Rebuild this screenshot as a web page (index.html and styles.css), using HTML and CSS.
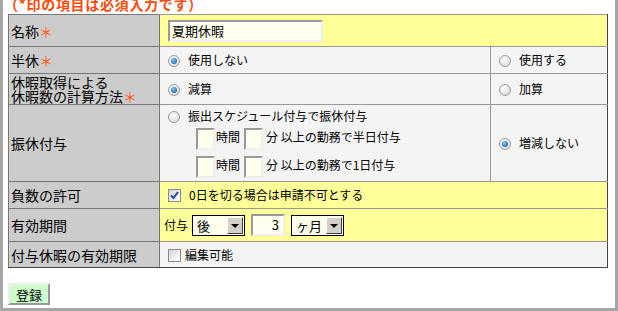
FILE: index.html
```html
<!DOCTYPE html>
<html lang="ja">
<head>
    <meta charset="UTF-8">
    <title>休暇設定</title>
    <link rel="stylesheet" href="styles.css">
</head>
<body>
    <div class="frame">
        <p class="note">（*印の項目は必須入力です）</p>
        <table class="form">
            <tr class="r1">
                <th>名称<span class="req">＊</span></th>
                <td colspan="2" class="yellow"><span class="text wide">夏期休暇</span></td>
            </tr>
            <tr class="r2">
                <th>半休<span class="req">＊</span></th>
                <td class="mid"><span class="radio on"></span>使用しない</td>
                <td class="side"><span class="radio"></span>使用する</td>
            </tr>
            <tr class="r3">
                <th>休暇取得による<br>休暇数の計算方法<span class="req">＊</span></th>
                <td class="mid"><span class="radio on"></span>減算</td>
                <td class="side"><span class="radio"></span>加算</td>
            </tr>
            <tr class="r4">
                <th>振休付与</th>
                <td class="mid">
                    <div class="line first"><span class="radio"></span>振出スケジュール付与で振休付与</div>
                    <div class="line sub"><span class="text tiny"></span>時間<span class="text tiny"></span>分 以上の勤務で半日付与</div>
                    <div class="line sub"><span class="text tiny"></span>時間<span class="text tiny"></span>分 以上の勤務で1日付与</div>
                </td>
                <td class="side"><span class="radio on"></span>増減しない</td>
            </tr>
            <tr class="r5">
                <th>負数の許可</th>
                <td colspan="2" class="yellow"><span class="check on"><svg width="11" height="11" viewBox="0 0 11 11"><path d="M2 5.5 L4.5 8 L9 2" fill="none" stroke="#2147a8" stroke-width="2"/></svg></span>0日を切る場合は申請不可とする</td>
            </tr>
            <tr class="r6">
                <th>有効期間</th>
                <td colspan="2" class="yellow">
                    <div class="period">
                        <span class="lead">付与</span>
                        <span class="select s1"><span class="val">後</span><span class="btn"></span></span>
                        <span class="text num">3</span>
                        <span class="select s2"><span class="val">ヶ月</span><span class="btn"></span></span>
                    </div>
                </td>
            </tr>
            <tr class="r7">
                <th>付与休暇の有効期限</th>
                <td colspan="2" class="mid"><span class="check"></span>編集可能</td>
            </tr>
        </table>
        <button class="submit">登録</button>
    </div>
</body>
</html>
```

FILE: styles.css
```css
body {
    margin: 0;
    font-family: "Noto Sans CJK JP", "DejaVu Sans", sans-serif;
    font-size: 12px;
    color: #000;
    background: #fff;
}
.frame {
    width: 618px;
    height: 311px;
    box-sizing: border-box;
    border: 3px solid #a6a6a6;
    border-top: none;
    padding: 0 5px;
    overflow: hidden;
}
.note {
    margin: -6px 0 0 -4px;
    height: 20px;
    font-size: 14px;
    line-height: 20px;
    font-weight: bold;
    color: #ff4a0a;
    letter-spacing: 0.7px;
}
.form {
    border-collapse: collapse;
    width: 600px;
    border: 1px solid #444;
    font-size: 12px;
}
.form th {
    width: 148px;
    background: #cccccc;
    border: 1px solid #777;
    font-weight: normal;
    font-size: 14px;
    text-align: left;
    padding: 0 0 0 2px;
    line-height: 14px;
    vertical-align: middle;
}
.form td {
    border: 1px solid #999;
    padding: 0 0 0 8px;
    vertical-align: middle;
    white-space: nowrap;
    line-height: 16px;
}
.form td.mid,
.form td.side {
    background: #f4f4f4;
}
.form td.side {
    width: 108px;
}
.form td.yellow {
    background: #ffff99;
    border-right: 1px solid #444;
}
.form td.side,
.r7 td {
    border-right: 1px solid #444;
}
.r1 th, .r1 td { height: 31px; }
.r2 th, .r2 td { height: 26px; }
.r3 th, .r3 td { height: 30px; }
.r4 th, .r4 td { height: 76px; }
.r5 th, .r5 td { height: 26px; }
.r6 th, .r6 td { height: 32px; }
.r7 th, .r7 td { height: 25px; }
.r7 th { border-bottom: 1px solid #444; }
.r7 td { border-bottom: 1px solid #444; }
.req {
    color: #ff5a1a;
}
.radio {
    display: inline-block;
    box-sizing: border-box;
    width: 12px;
    height: 12px;
    border: 1px solid #a0a0a0;
    border-radius: 50%;
    background: radial-gradient(circle at 40% 35%, #ffffff, #d0d0d0);
    vertical-align: -2px;
    margin-right: 8px;
    position: relative;
}
.radio.on::after {
    content: "";
    position: absolute;
    left: 2px;
    top: 2px;
    width: 6px;
    height: 6px;
    border-radius: 50%;
    background: radial-gradient(circle at 40% 35%, #7cc8f4, #0a4f9a);
}
.check {
    display: inline-block;
    box-sizing: border-box;
    width: 13px;
    height: 13px;
    border: 1px solid #8a8a8a;
    background: linear-gradient(135deg, #d4d4d4, #ffffff);
    vertical-align: -2px;
    margin-right: 4px;
    position: relative;
}
.check svg {
    position: absolute;
    left: 0;
    top: 0;
}
.r5 .check {
    margin-right: 8px;
}
.text {
    display: inline-block;
    box-sizing: border-box;
    height: 22px;
    background: #ffffee;
    border: 2px solid #eeeeee;
    border-top-color: #999;
    border-left-color: #999;
    vertical-align: middle;
    font-size: 13px;
    line-height: 18px;
}
.text.wide {
    width: 155px;
    padding-left: 2px;
}
.text.tiny {
    width: 19px;
    margin: 0 1px 0 0;
}
.line {
    line-height: 16px;
}
.line.first {
    margin-top: -2px;
}
.line.sub {
    margin: 2px 0 0 28px;
    height: 22px;
    line-height: 22px;
}
.line.sub + .line.sub {
    margin-top: 6px;
}
.line.sub .text.tiny:nth-of-type(2) {
    margin-left: 4px;
    margin-right: 3px;
}
.period {
    display: flex;
    align-items: center;
    gap: 6px;
    margin-left: -4px;
}
.period .lead {
    margin-right: -2px;
}
.select {
    display: inline-flex;
    box-sizing: border-box;
    height: 21px;
    border: 1px solid #000;
    background: #ffffee;
    align-items: stretch;
}
.select.s1 { width: 53px; }
.select.s2 { width: 53px; }
.select .val {
    flex: 1;
    padding-left: 4px;
    font-size: 13px;
    line-height: 19px;
}
.select .btn {
    width: 16px;
    margin: 1px;
    background: #d4d0c8;
    border: 1px solid #fff;
    border-right-color: #404040;
    border-bottom-color: #404040;
    box-sizing: border-box;
    position: relative;
}
.select .btn::after {
    content: "";
    position: absolute;
    left: 3px;
    top: 6px;
    border-left: 4px solid transparent;
    border-right: 4px solid transparent;
    border-top: 4px solid #000;
}
.text.num {
    width: 34px;
    text-align: right;
    padding-right: 4px;
}
.submit {
    display: block;
    margin-top: 15px;
    width: 42px;
    height: 22px;
    padding: 0;
    font-family: inherit;
    font-size: 13px;
    background: #ccffcc;
    border: 2px solid #eeeeee;
    border-right-color: #999;
    border-bottom-color: #999;
}
```
